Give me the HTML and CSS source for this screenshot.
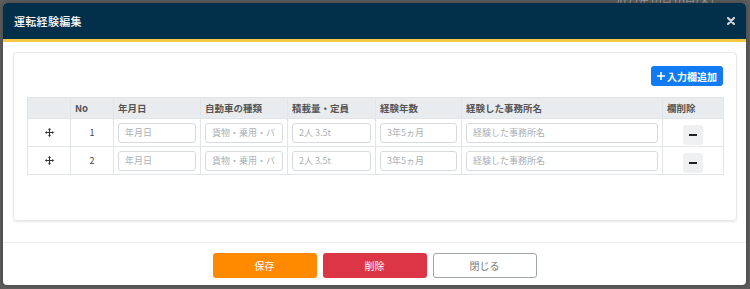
FILE: index.html
```html
<!DOCTYPE html>
<html lang="ja">
<head>
    <meta charset="UTF-8">
    <meta name="viewport" content="width=device-width, initial-scale=1.0">
    <title>運転経験編集</title>
    <link rel="stylesheet" href="styles.css">
</head>
<body>
    <span class="backdrop-date">2022年10月10日(木)</span>

    <!-- Modal -->
    <div class="modal">
        <div class="modal-header">
            <h1>運転経験編集</h1>
            <span class="close"><svg viewBox="0 0 8 8" width="8" height="8"><path d="M1 1l6 6M7 1L1 7" stroke="#d0d6dc" stroke-width="2.2" stroke-linecap="round"/></svg></span>
        </div>

        <div class="modal-body">
            <div class="card">
                <div class="toolbar">
                    <button class="btn-add">
                        <svg viewBox="0 0 10 10" width="8" height="8"><path d="M4 0h2v4h4v2H6v4H4V6H0V4h4z" fill="#fff"/></svg>
                        入力欄追加
                    </button>
                </div>

                <table class="exp-table">
                    <colgroup>
                        <col style="width:43px">
                        <col style="width:43px">
                        <col style="width:87px">
                        <col style="width:87px">
                        <col style="width:88px">
                        <col style="width:86px">
                        <col style="width:201px">
                        <col style="width:61px">
                    </colgroup>
                    <thead>
                        <tr>
                            <th></th>
                            <th>No</th>
                            <th>年月日</th>
                            <th>自動車の種類</th>
                            <th>積載量・定員</th>
                            <th>経験年数</th>
                            <th>経験した事務所名</th>
                            <th>欄削除</th>
                        </tr>
                    </thead>
                    <tbody>
                        <tr>
                            <td class="handle"><svg viewBox="0 0 16 16" width="9" height="9"><path d="M8 0l3 3H9v4h4V5l3 3-3 3V9H9v4h2l-3 3-3-3h2V9H3v2L0 8l3-3v2h4V3H5z" fill="#333"/></svg></td>
                            <td class="num">1</td>
                            <td><input type="text" placeholder="年月日"></td>
                            <td><input type="text" placeholder="貨物・乗用・バス"></td>
                            <td><input type="text" placeholder="2人 3.5t"></td>
                            <td><input type="text" placeholder="3年5ヵ月"></td>
                            <td><input type="text" placeholder="経験した事務所名"></td>
                            <td class="del"><button class="btn-minus"><span></span></button></td>
                        </tr>
                        <tr>
                            <td class="handle"><svg viewBox="0 0 16 16" width="9" height="9"><path d="M8 0l3 3H9v4h4V5l3 3-3 3V9H9v4h2l-3 3-3-3h2V9H3v2L0 8l3-3v2h4V3H5z" fill="#333"/></svg></td>
                            <td class="num">2</td>
                            <td><input type="text" placeholder="年月日"></td>
                            <td><input type="text" placeholder="貨物・乗用・バス"></td>
                            <td><input type="text" placeholder="2人 3.5t"></td>
                            <td><input type="text" placeholder="3年5ヵ月"></td>
                            <td><input type="text" placeholder="経験した事務所名"></td>
                            <td class="del"><button class="btn-minus"><span></span></button></td>
                        </tr>
                    </tbody>
                </table>
            </div>
        </div>

        <div class="modal-footer">
            <button class="btn btn-save">保存</button>
            <button class="btn btn-delete">削除</button>
            <button class="btn btn-close">閉じる</button>
        </div>
    </div>
</body>
</html>
```

FILE: styles.css
```css
body {
    margin: 0;
    padding: 3px;
    background-color: #5c5c5c;
    font-family: "Noto Sans CJK JP", "Noto Sans", sans-serif;
    overflow: hidden;
}

.backdrop-date {
    position: absolute;
    top: -7px;
    right: 36px;
    font-size: 11px;
    color: #9a9a9a;
}

.modal {
    position: relative;
    width: 743px;
    height: 282px;
    background-color: white;
    border-radius: 4px;
    overflow: hidden;
    display: flex;
    flex-direction: column;
    box-shadow: 0 0 4px rgba(0, 0, 0, 0.3);
}

.modal-header {
    height: 36px;
    background-color: #02304a;
    border-bottom: 3px solid #f6c744;
    display: flex;
    align-items: center;
    justify-content: space-between;
    padding: 0 11px 0 11px;
}

.modal-header h1 {
    margin: 0;
    font-size: 11px;
    font-weight: 500;
    color: white;
    letter-spacing: 0.3px;
}

.close {
    display: flex;
    margin-right: 0;
}

.modal-body {
    padding: 10px 9px 21px 10px;
}

.card {
    border: 1px solid #e6e8eb;
    border-radius: 4px;
    box-shadow: 0 1px 2px rgba(0, 0, 0, 0.1);
    padding: 13px 13px 45px 13px;
}

.toolbar {
    display: flex;
    justify-content: flex-end;
    margin-bottom: 11px;
}

.btn-add {
    display: flex;
    align-items: center;
    gap: 2px;
    height: 20px;
    padding: 0 6px 0 6px;
    background-color: #107bf3;
    color: white;
    border: none;
    border-radius: 3px;
    font-family: inherit;
    font-size: 10px;
    font-weight: bold;
}

.exp-table {
    border-collapse: collapse;
    table-layout: fixed;
    width: 696px;
}

.exp-table th,
.exp-table td {
    border: 1px solid #e1e4e8;
    padding: 0 4px;
}

.exp-table th {
    height: 20px;
    background-color: #e9ecef;
    color: #555;
    font-size: 9.5px;
    font-weight: bold;
    text-align: left;
}

.exp-table td {
    height: 27px;
}

.exp-table td.handle,
.exp-table td.num,
.exp-table td.del {
    text-align: center;
}

.exp-table td.handle svg {
    display: block;
    margin: 0 auto;
}

.exp-table td.num {
    font-size: 9px;
    color: #444;
}

.exp-table input {
    display: block;
    box-sizing: border-box;
    width: 100%;
    height: 20px;
    padding: 0 6px;
    border: 1px solid #d6dadf;
    border-radius: 3px;
    font-family: inherit;
    font-size: 9px;
    outline: none;
}

.exp-table input::placeholder {
    color: #aab0b6;
}

.btn-minus {
    width: 20px;
    height: 20px;
    padding: 0;
    border: none;
    border-radius: 3px;
    background-color: #eef0f2;
    display: inline-flex;
    align-items: center;
    justify-content: center;
    vertical-align: middle;
}

.btn-minus span {
    width: 8px;
    height: 2px;
    background-color: #222;
}

.modal-footer {
    border-top: 1px solid #eceef0;
    display: flex;
    justify-content: center;
    gap: 6px;
    padding-top: 10px;
}

.btn {
    width: 104px;
    height: 25px;
    border-radius: 3px;
    font-family: inherit;
    font-size: 10px;
    border: 1px solid transparent;
}

.btn-save {
    background-color: #ff8a00;
    color: white;
}

.btn-delete {
    background-color: #dc3545;
    color: white;
}

.btn-close {
    background-color: white;
    border-color: #9ea4aa;
    color: #777;
}
```
